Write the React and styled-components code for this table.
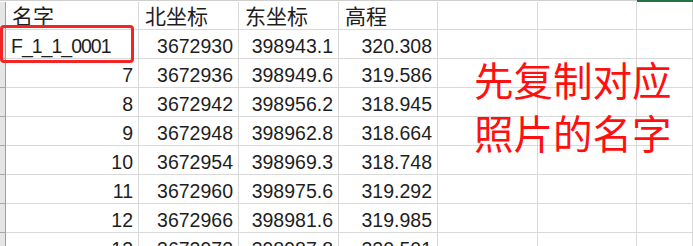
import React from "react"
import styled, { createGlobalStyle } from "styled-components"

const columns = "6px 133px 100px 100px 99px 100px 99px 1fr"

const headers = ["名字", "北坐标", "东坐标", "高程", "", "", ""]

const rows = [
  ["F_1_1_0001", "3672930", "398943.1", "320.308"],
  ["7", "3672936", "398949.6", "319.586"],
  ["8", "3672942", "398956.2", "318.945"],
  ["9", "3672948", "398962.8", "318.664"],
  ["10", "3672954", "398969.3", "318.748"],
  ["11", "3672960", "398975.6", "319.292"],
  ["12", "3672966", "398981.6", "319.985"],
  ["13", "3672972", "398987.8", "320.501"],
]

const App = () => {
  return (
    <>
      <GlobalStyle />
      <Sheet>
        <Grid>
          <TopEdge />
          {headers.map((h, i) => (
            <TopEdge key={"t" + i} $selected={i === headers.length - 1} />
          ))}

          <RowHead $header />
          {headers.map((h, i) => (
            <HeadCell key={"h" + i}>{h}</HeadCell>
          ))}

          {rows.map((row, r) => (
            <React.Fragment key={r}>
              <RowHead />
              {headers.map((h, c) => (
                <Cell key={c} $left={r === 0 && c === 0}>
                  {row[c] || ""}
                </Cell>
              ))}
            </React.Fragment>
          ))}
        </Grid>

        <Highlight />
        <Note>
          先复制对应
          <br />
          照片的名字
        </Note>
      </Sheet>
    </>
  )
}

const GlobalStyle = createGlobalStyle`
  html, body {
    margin: 0;
    padding: 0;
    background: #ffffff;
    overflow: hidden;
  }
`

const Sheet = styled.div`
  position: relative;
  width: 693px;
  height: 246px;
  overflow: hidden;
  background: #ffffff;
`

const Grid = styled.div`
  display: grid;
  grid-template-columns: ${columns};
  grid-template-rows: 2px 28px;
  grid-auto-rows: 29px;
`

const TopEdge = styled.div`
  box-sizing: border-box;
  border-top: 1px solid #cfcfcf;
  background: ${p => (p.$selected ? "#217346" : "#ffffff")};
  ${p => p.$selected && "border-top-color: #217346;"}
`

const RowHead = styled.div`
  box-sizing: border-box;
  background: #e6e6e6;
  border-right: 1px solid #9e9e9e;
  border-bottom: 1px solid ${p => (p.$header ? "#d4d4d4" : "#a8a8a8")};
`

const Cell = styled.div`
  box-sizing: border-box;
  display: flex;
  align-items: flex-end;
  justify-content: ${p => (p.$left ? "flex-start" : "flex-end")};
  padding: 0 5px 0 ${p => (p.$left ? "5px" : "0")};
  border-right: 1px solid #d9d9d9;
  border-bottom: 1px solid #d9d9d9;
  font-family: "Liberation Sans", "Noto Sans CJK SC", sans-serif;
  font-size: 19.5px;
  line-height: 24px;
  letter-spacing: ${p => (p.$left ? "-1px" : "0")};
  color: #1e1e1e;
  white-space: nowrap;
`

const HeadCell = styled(Cell)`
  justify-content: flex-start;
  padding-left: 6px;
  font-family: "Noto Sans CJK SC", sans-serif;
  font-size: 21px;
  line-height: 28px;
`

const Highlight = styled.div`
  position: absolute;
  left: 0;
  top: 25px;
  width: 134px;
  height: 38px;
  box-sizing: border-box;
  border: 3px solid #f22424;
  border-radius: 4px;
`

const Note = styled.div`
  position: absolute;
  left: 474px;
  top: 52px;
  font-family: "Noto Sans CJK SC", sans-serif;
  font-size: 39.5px;
  line-height: 53px;
  color: #ff1010;
  white-space: nowrap;
`

export default App
